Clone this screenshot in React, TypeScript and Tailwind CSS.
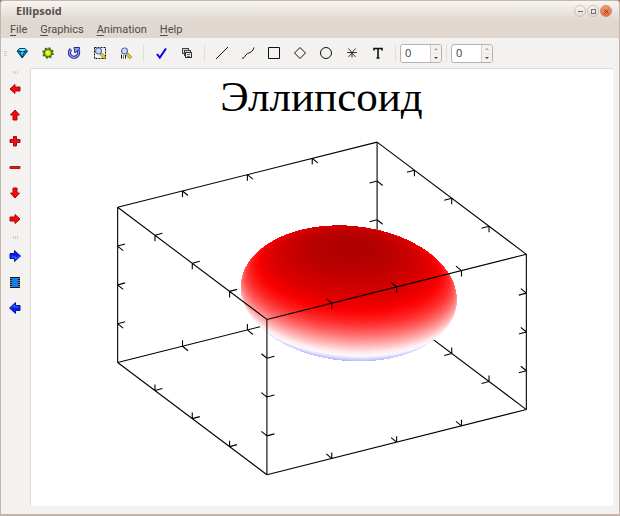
import { useState } from "react";
import type { ReactNode } from "react";

type Vec = [number, number];

// Box axes in screen pixels
const AX: Vec = [259, -65];
const AY: Vec = [149, 112];
const AZ: Vec = [0, 155];
const ORIGIN: Vec = [87.5, 139];

// Tick strokes along each axis
const TX: Vec = [7.5, -2];
const TY: Vec = [5.5, 4.5];
const TZ: Vec = [0, 6];

const corner = (i: number, j: number, k: number): Vec => [
  ORIGIN[0] + AX[0] * i + AY[0] * j + AZ[0] * k,
  ORIGIN[1] + AX[1] * i + AY[1] * j + AZ[1] * k,
];

function edgePath(from: Vec, to: Vec, t1: Vec, s1: number, t2: Vec, s2: number) {
  let d = `M${from[0]} ${from[1]}L${to[0]} ${to[1]}`;
  for (const f of [0.25, 0.5, 0.75]) {
    const x = from[0] + (to[0] - from[0]) * f;
    const y = from[1] + (to[1] - from[1]) * f;
    d += `M${x} ${y}L${x + t1[0] * s1} ${y + t1[1] * s1}`;
    d += `M${x} ${y}L${x + t2[0] * s2} ${y + t2[1] * s2}`;
  }
  return d;
}

const backEdges = [
  edgePath(corner(0, 0, 0), corner(1, 0, 0), TY, 1, TZ, 1),
  edgePath(corner(1, 0, 0), corner(1, 1, 0), TX, -1, TZ, 1),
  edgePath(corner(1, 0, 0), corner(1, 0, 1), TX, -1, TY, 1),
  edgePath(corner(0, 0, 1), corner(1, 0, 1), TY, 1, TZ, -1),
  edgePath(corner(1, 0, 1), corner(1, 1, 1), TX, -1, TZ, -1),
];

const frontEdges = [
  edgePath(corner(0, 0, 0), corner(0, 1, 0), TX, 1, TZ, 1),
  edgePath(corner(0, 1, 0), corner(1, 1, 0), TY, -1, TZ, 1),
  edgePath(corner(0, 0, 0), corner(0, 0, 1), TX, 1, TY, 1),
  edgePath(corner(0, 1, 0), corner(0, 1, 1), TX, 1, TY, -1),
  edgePath(corner(1, 1, 0), corner(1, 1, 1), TX, -1, TY, -1),
  edgePath(corner(0, 0, 1), corner(0, 1, 1), TX, 1, TZ, -1),
  edgePath(corner(0, 1, 1), corner(1, 1, 1), TY, -1, TZ, -1),
];

// Height -> colour
const STOPS: [number, number, number, number][] = [
  [-1, 150, 150, 255],
  [-0.66, 172, 172, 255],
  [-0.48, 208, 208, 255],
  [-0.33, 252, 248, 255],
  [-0.2, 255, 230, 230],
  [0, 255, 168, 168],
  [0.2, 255, 98, 98],
  [0.35, 255, 48, 48],
  [0.5, 253, 8, 8],
  [0.56, 246, 0, 0],
  [0.68, 224, 0, 0],
  [0.8, 207, 0, 0],
  [0.92, 188, 0, 0],
  [1, 175, 0, 0],
];

function colour(z: number) {
  let i = 1;
  while (i < STOPS.length - 1 && z > STOPS[i][0]) i++;
  const a = STOPS[i - 1];
  const b = STOPS[i];
  const f = (z - a[0]) / (b[0] - a[0]);
  const c = [1, 2, 3].map((n) => Math.round(a[n] + (b[n] - a[n]) * f));
  return `rgb(${c.join(",")})`;
}

// Horizontal slices, painted from the bottom up
const SLICES = Array.from({ length: 220 }, (_, i) => {
  const angle = -Math.PI / 2 + (Math.PI * (i + 0.5)) / 220;
  return { z: Math.sin(angle), r: Math.cos(angle) };
});

function Plot() {
  return (
    <svg viewBox="1 1 581 436" className="block w-full" role="img" aria-label="Эллипсоид">
      <text
        x="291"
        y="43"
        textAnchor="middle"
        fontSize="43"
        fontFamily="'Liberation Serif', serif"
        fill="#000"
      >
        Эллипсоид
      </text>
      <g fill="none" stroke="#000" strokeWidth="1.1">
        {backEdges.map((d) => (
          <path key={d} d={d} />
        ))}
      </g>
      <g shapeRendering="crispEdges">
        {SLICES.map(({ z, r }) => (
          <circle
            key={z}
            r={r}
            fill={colour(z)}
            transform={`matrix(108 6.3 0 50 318.3 ${225 - 45.6 * z})`}
          />
        ))}
      </g>
      <g fill="none" stroke="#000" strokeWidth="1.1">
        {frontEdges.map((d) => (
          <path key={d} d={d} />
        ))}
      </g>
    </svg>
  );
}

function Icon({ children }: { children: ReactNode }) {
  return (
    <svg width="14" height="14" viewBox="0 0 14 14" fill="none" aria-hidden="true">
      {children}
    </svg>
  );
}

const magnifier = (
  <>
    <path d="M8 8l4 4" stroke="#7a6a10" strokeWidth="3" />
    <path d="M8.3 8.3l3.4 3.4" stroke="#f7dc12" strokeWidth="1.8" />
    <circle cx="5.5" cy="5" r="3" fill="#c9dcf5" stroke="#5a6cae" strokeWidth="1.2" />
  </>
);

const fileTools = [
  {
    label: "Redraw",
    icon: (
      <>
        <path d="M2 5l2.5-2.5h5.5L12.5 5 7.2 12z" fill="#12a6cf" stroke="#063a6b" />
        <path d="M4.5 3L6 5.5h3L10 3" fill="#7df0f5" />
        <path d="M2 5.5h10M5 5.5L7.2 11.5 9.5 5.5" stroke="#04336b" />
        <path d="M5.5 5.8h3.4L7.2 10z" fill="#27d8e6" />
      </>
    ),
  },
  {
    label: "Light",
    icon: (
      <>
        <circle cx="7" cy="7" r="4.8" stroke="#3d6414" strokeWidth="1.8" strokeDasharray="2 1.77" />
        <circle cx="7" cy="7" r="3.9" fill="#8fc31a" stroke="#3f7416" strokeWidth="1.4" />
        <circle cx="7" cy="7" r="2.5" fill="#f2f000" />
        <circle cx="6.4" cy="6.2" r="1" fill="#fdffb0" />
      </>
    ),
  },
  {
    label: "Rotate",
    icon: (
      <>
        <path d="M4 3.2A4.6 4.6 0 1 0 10.8 4" stroke="#23239a" strokeWidth="3.2" />
        <path d="M4 3.2A4.6 4.6 0 1 0 10.8 4" stroke="#8d9af0" strokeWidth="1.4" />
        <path d="M7 1.5h5.5V3L8 7z" fill="#8d9af0" stroke="#23239a" />
      </>
    ),
  },
  {
    label: "Select zoom",
    icon: (
      <>
        <rect x="1.5" y="1.5" width="11" height="11" stroke="#111" strokeDasharray="2 1" />
        {magnifier}
      </>
    ),
  },
  {
    label: "Restore zoom",
    icon: (
      <>
        {magnifier}
        <path d="M2.5 8.5v4M6.5 9v3.5M4.5 9.5v1M4.5 11.5v1" stroke="#111" />
      </>
    ),
  },
];

const editTools = [
  {
    label: "Apply",
    icon: <path d="M3 8l2.8 3.5L12 2.5" stroke="#0000f5" strokeWidth="2" />,
  },
  {
    label: "Copy",
    icon: (
      <>
        <rect x="2.5" y="2.5" width="6" height="5" fill="#d4d4d4" stroke="#444" />
        <rect x="4.5" y="4.5" width="6" height="5" fill="#d4d4d4" stroke="#444" />
        <rect x="5.5" y="6.5" width="6" height="5" fill="#e8e8e8" stroke="#333" />
        <path d="M7 8.5h3M7 10.5h3" stroke="#666" />
      </>
    ),
  },
];

const shapeTools = [
  { label: "Line", icon: <path d="M1 13L13 1" stroke="#111" /> },
  { label: "Curve", icon: <path d="M1 12.5C4 12 4 9 6.5 7.5 10 6.5 12 5 13 1.5" stroke="#111" /> },
  { label: "Rectangle", icon: <path d="M1.5 1.5h11v11h-11z" stroke="#111" /> },
  { label: "Rhomb", icon: <path d="M7 1.5L12.5 7 7 12.5 1.5 7z" stroke="#111" /> },
  { label: "Ellipse", icon: <circle cx="7" cy="7" r="5.5" stroke="#111" /> },
  {
    label: "Mark",
    icon: <path d="M2 6.5h10M3.5 2.5L10.5 11M10.5 2.5L3.5 11M7 6.5v5" stroke="#222" strokeWidth=".9" />,
  },
  {
    label: "Text",
    icon: <path d="M3 4.5v-2h8v2M7 2.5v9.5M5.5 12h3" stroke="#111" strokeWidth="1.6" />,
  },
];

const redArrow = (turn: number) => (
  <path
    d="M7 2.500V5h5v4h-5v2.500L2 7z"
    fill="#ff0505"
    stroke="#a00c0c"
    transform={`rotate(${turn} 7 7)`}
  />
);
const blueArrow = (turn: number) => (
  <g transform={`rotate(${turn} 7 7)`}>
    <path d="M7.5 1.5v3h4.5v5H7.5v3L1.5 7z" fill="#0a1cf0" stroke="#07178f" />
    <path d="M3.5 6.5l3-2.5v2h4" stroke="#3f6dff" />
  </g>
);

const moveTools = [
  { label: "Left", icon: redArrow(0) },
  { label: "Up", icon: redArrow(90) },
  {
    label: "Zoom in",
    icon: <path d="M5.5 2.500h3v3h3.500v3h-3.500v3.500h-3v-3.500h-3.500v-3h3.500z" fill="#f01010" stroke="#a00c0c" />,
  },
  { label: "Zoom out", icon: <path d="M2 6.500h10v2H2z" fill="#f01010" stroke="#b01818" /> },
  { label: "Down", icon: redArrow(270) },
  { label: "Right", icon: redArrow(180) },
];

const slideTools = [
  { label: "Next slide", icon: blueArrow(180) },
  {
    label: "Slideshow",
    icon: (
      <>
        <rect x="2" y="2" width="10" height="11" fill="#151515" />
        <rect x="4" y="3" width="6" height="9" fill="#0a80f5" />
        <path d="M3 3v10M11 3v10" stroke="#ddd" strokeDasharray="1 1" />
      </>
    ),
  },
  { label: "Previous slide", icon: blueArrow(0) },
];

type Tool = { label: string; icon: ReactNode };

function ToolButtons({ tools }: { tools: Tool[] }) {
  return tools.map((tool) => (
    <button
      key={tool.label}
      type="button"
      aria-label={tool.label}
      className="flex size-[26px] shrink-0 items-center justify-center"
    >
      <Icon>{tool.icon}</Icon>
    </button>
  ));
}

function Separator() {
  return <div className="mx-1 h-[18px] w-px bg-[#e3e0dc]" />;
}

function Spinner({ label }: { label: string }) {
  const [value, setValue] = useState(0);
  return (
    <div className="flex h-[19px] w-[42px] overflow-hidden rounded-[3px] border border-[#bdb1a7] bg-white">
      <input
        type="text"
        aria-label={label}
        value={value}
        onChange={(e) => setValue(Number(e.target.value) || 0)}
        className="min-w-0 flex-1 px-1 text-[11px] leading-4 text-[#3c3c3c] outline-none"
      />
      <div className="flex w-[11px] flex-col border-l border-[#d5ccc5] bg-[#f4f1ee]">
        <button
          type="button"
          aria-label={`${label} up`}
          onClick={() => setValue(value + 1)}
          className="flex flex-1 items-center justify-center"
        >
          <svg width="4" height="2" viewBox="0 0 4 2" aria-hidden="true">
            <path d="M0 2l2-2 2 2z" fill="#aaa39d" />
          </svg>
        </button>
        <button
          type="button"
          aria-label={`${label} down`}
          onClick={() => setValue(value - 1)}
          className="flex flex-1 items-center justify-center border-t border-[#ece7e3]"
        >
          <svg width="4" height="2" viewBox="0 0 4 2" aria-hidden="true">
            <path d="M0 0l2 2 2-2z" fill="#4a4a4a" />
          </svg>
        </button>
      </div>
    </div>
  );
}

function Grip({ vertical }: { vertical?: boolean }) {
  return (
    <div className={vertical ? "flex flex-col gap-px" : "flex gap-px"}>
      {[0, 1, 2].map((n) => (
        <span key={n} className={vertical ? "h-px w-[3px] bg-[#d2cdc8]" : "h-[3px] w-px bg-[#d2cdc8]"} />
      ))}
    </div>
  );
}

const windowButton =
  "flex size-3 items-center justify-center rounded-full border border-[#c9c0b9] bg-linear-to-b from-[#f8f6f4] to-[#e0dad5]";

export default function App() {
  return (
    <div className="bg-[#8a817a]">
      <div className="flex min-h-screen flex-col overflow-hidden rounded-t-[4px] border border-b-2 border-[#c4b5aa] bg-[#f4f2f1] font-['Open_Sans',sans-serif]">
        <header className="flex h-5 items-center justify-between bg-linear-to-b from-[#f7f5f3] to-[#dfd7d0] pr-[7px] pl-[15px]">
          <h1 className="text-[11px] leading-4 font-bold text-[#554f4a]">Ellipsoid</h1>
          <div className="flex gap-px">
            <button type="button" aria-label="Minimize" className={windowButton}>
              <span className="h-px w-[5px] bg-[#6b655f]" />
            </button>
            <button type="button" aria-label="Maximize" className={windowButton}>
              <span className="size-[5px] border border-[#77716b]" />
            </button>
            <button
              type="button"
              aria-label="Close"
              className="flex size-3 items-center justify-center rounded-full border border-[#d0886c] bg-linear-to-b from-[#f49a78] to-[#ec6433]"
            >
              <svg width="5" height="5" viewBox="0 0 5 5" aria-hidden="true">
                <path d="M.5.5l4 4M4.5.5l-4 4" stroke="#7a3a22" />
              </svg>
            </button>
          </div>
        </header>

        <nav className="flex h-[17px] items-center gap-[13px] bg-[#dfd7d0] px-[9px] font-[Roboto,sans-serif] text-[11px] leading-4 text-[#4c4c4c]">
          {["File", "Graphics", "Animation", "Help"].map((item) => (
            <button key={item} type="button">
              <span className="underline underline-offset-2">{item[0]}</span>
              {item.slice(1)}
            </button>
          ))}
        </nav>

        <div className="flex h-[30px] items-center pl-[3px]">
          <div className="w-[5px]">
            <Grip vertical />
          </div>
          <ToolButtons tools={fileTools} />
          <Separator />
          <ToolButtons tools={editTools} />
          <Separator />
          <ToolButtons tools={shapeTools} />
          <Separator />
          <Spinner label="Transparency" />
          <Separator />
          <Spinner label="Lighting" />
        </div>

        <div className="flex flex-1">
          <aside className="flex w-[29px] shrink-0 flex-col items-center pr-px">
            <div className="flex h-2 items-center">
              <Grip />
            </div>
            <ToolButtons tools={moveTools} />
            <div className="flex h-[11px] items-center">
              <Grip />
            </div>
            <ToolButtons tools={slideTools} />
          </aside>
          <main className="mr-1.5 mb-2 min-w-0 flex-1 border-t border-l border-[#dedad5] bg-white">
            <Plot />
          </main>
        </div>
      </div>
    </div>
  );
}
